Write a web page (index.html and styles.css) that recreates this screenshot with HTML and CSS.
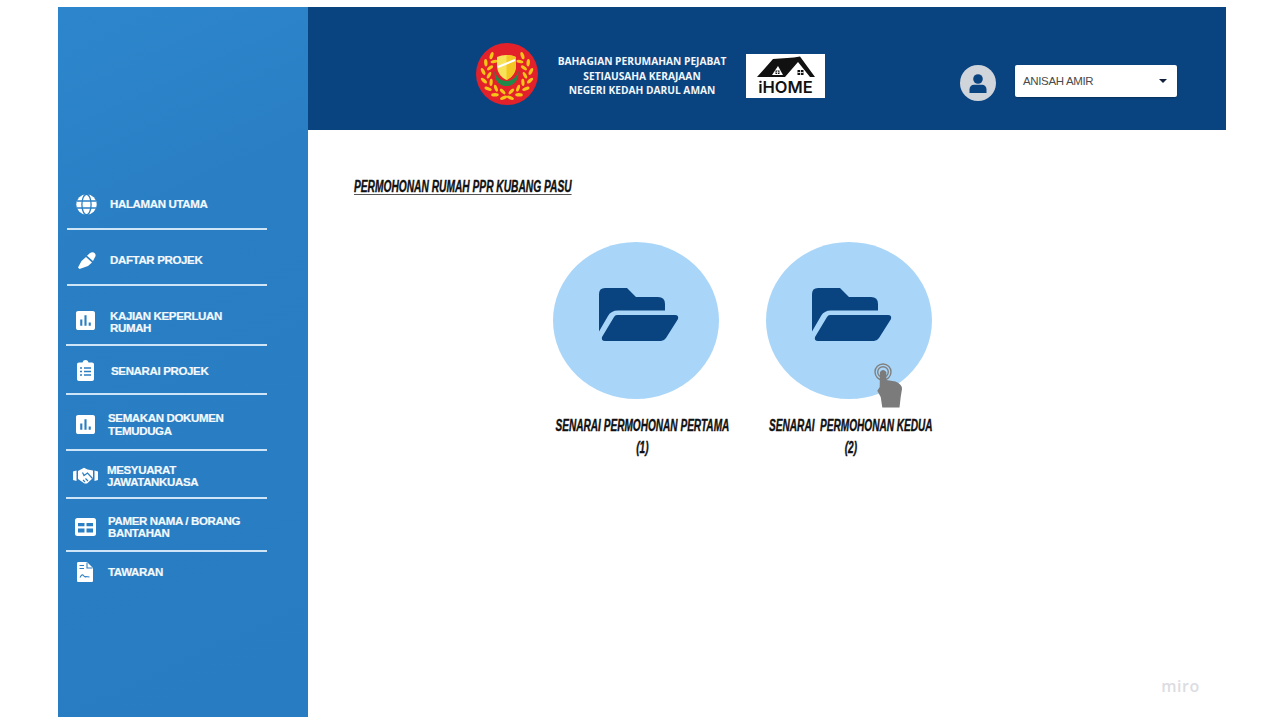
FILE: index.html
```html
<!DOCTYPE html>
<html lang="ms">
<head>
  <meta charset="UTF-8">
  <meta name="viewport" content="width=device-width, initial-scale=1">
  <title>iHOME - Permohonan Rumah PPR</title>
  <link rel="stylesheet" href="styles.css">
</head>
<body>
  <div class="app">
    <aside class="sidebar">
      <nav class="menu">
        <a class="menu-row">
          <span class="menu-icon"><svg width="21" height="21" viewBox="0 0 21 21"><circle cx="10.5" cy="10.5" r="10.2" fill="#fff"/><g fill="none" stroke="#2a7fc4" stroke-width="1.3"><ellipse cx="10.5" cy="10.5" rx="4.6" ry="10.2"/><path d="M0.8 7H20.2M0.8 14H20.2"/></g></svg></span>
          <span>HALAMAN UTAMA</span>
        </a>
        <a class="menu-row">
          <span class="menu-icon pen"><svg width="18" height="17" viewBox="0 0 18 17"><path fill="#fff" d="M1.500 17L0 15.500L3.500 9L8 5L14 10.500L10 14ZM9 3.800L12 1Q15 -.5 17 1.500Q18.500 3.500 16.500 6L15 9Z"/></svg></span>
          <span>DAFTAR PROJEK</span>
        </a>
        <a class="menu-row">
          <span class="menu-icon"><svg width="19" height="19" viewBox="3 3 18 18"><path fill="#fff" d="M19 3H5c-1.1 0-2 .9-2 2v14c0 1.1.9 2 2 2h14c1.1 0 2-.9 2-2V5c0-1.1-.9-2-2-2zM9 17H7v-6h2v6zm4 0h-2V7h2v10zm4 0h-2v-3h2v3z"/></svg></span>
          <span>KAJIAN KEPERLUAN<br>RUMAH</span>
        </a>
        <a class="menu-row">
          <span class="menu-icon"><svg width="17" height="21" viewBox="0 0 17 21"><path fill="#fff" d="M2 2.500H5.500C6 .8 7 0 8.500 0S11 .8 11.500 2.500H15c1.200 0 2 .8 2 2V19c0 1.200-.8 2-2 2H2c-1.200 0-2-.8-2-2V4.500c0-1.200.8-2 2-2z"/><path stroke="#2a7fc4" stroke-width="1.600" d="M3 8H5M7 8H14M3 11.500H5M7 11.500H14M3 15H5M7 15H14"/></svg></span>
          <span>SENARAI PROJEK</span>
        </a>
        <a class="menu-row">
          <span class="menu-icon"><svg width="19" height="19" viewBox="3 3 18 18"><path fill="#fff" d="M19 3H5c-1.1 0-2 .9-2 2v14c0 1.1.9 2 2 2h14c1.1 0 2-.9 2-2V5c0-1.1-.9-2-2-2zM9 17H7v-6h2v6zm4 0h-2V7h2v10zm4 0h-2v-3h2v3z"/></svg></span>
          <span>SEMAKAN DOKUMEN<br>TEMUDUGA</span>
        </a>
        <a class="menu-row">
          <span class="menu-icon"><svg width="25" height="17" viewBox="0 0 25 17"><path fill="#fff" d="M0 4.500L3.500 3.500V14L0 13ZM25 4.500L21.500 3.500V14L25 13ZM5 4L11 .8L14.500 2.500L20 3.500V11L14 16.500H11.500L5 12Z"/><path fill="none" stroke="#2a7fc4" stroke-width="1.200" d="M9.500 5.500L11 8.500L14.500 6L19.500 11.500M10 13L12 15M12.500 11.500L15 14"/></svg></span>
          <span>MESYUARAT<br>JAWATANKUASA</span>
        </a>
        <a class="menu-row">
          <span class="menu-icon"><svg width="21" height="18" viewBox="0 0 21 18"><rect width="21" height="18" rx="2.500" fill="#fff"/><path fill="#2a7fc4" d="M3 5H9.500V8.200H3ZM11.500 5H18V8.200H11.500ZM3 10.500H9.500V14.500H3ZM11.500 10.500H18V14.500H11.500Z"/></svg></span>
          <span>PAMER NAMA / BORANG<br>BANTAHAN</span>
        </a>
        <a class="menu-row">
          <span class="menu-icon"><svg width="16" height="20" viewBox="0 0 16 20"><path fill="#fff" d="M1.500 0H10L16 6V18.500C16 19.500 15.500 20 14.500 20H1.500C.5 20 0 19.500 0 18.500V1.500C0 .5.5 0 1.500 0Z"/><path fill="none" stroke="#2a7fc4" stroke-width="1.100" d="M2.500 3.500H7M2.500 6.500H7M3 15.500Q5 11.500 6.500 13.500T9 14.500L12.500 15M10 .5V6H15.500"/></svg></span>
          <span>TAWARAN</span>
        </a>
      </nav>
    </aside>

    <main class="content">
      <header class="topbar">
        <svg class="crest" width="62" height="62" viewBox="0 0 62 62">
          <defs>
            <ellipse id="leaf" cx="31" cy="55" rx="3.800" ry="1.700" fill="#f5c518" transform="rotate(-32 31 55)"/>
            <ellipse id="leaf-in" cx="31" cy="49" rx="3.600" ry="1.600" fill="#f5c518" transform="rotate(32 31 49)"/>
            <g id="wreath">
              <use href="#leaf" transform="rotate(8 31 31)"/>
              <use href="#leaf" transform="rotate(30 31 31)"/>
              <use href="#leaf" transform="rotate(52 31 31)"/>
              <use href="#leaf" transform="rotate(74 31 31)"/>
              <use href="#leaf" transform="rotate(96 31 31)"/>
              <use href="#leaf" transform="rotate(118 31 31)"/>
              <use href="#leaf" transform="rotate(140 31 31)"/>
              <use href="#leaf-in" transform="rotate(14 31 31)"/>
              <use href="#leaf-in" transform="rotate(38 31 31)"/>
              <use href="#leaf-in" transform="rotate(62 31 31)"/>
              <use href="#leaf-in" transform="rotate(86 31 31)"/>
              <use href="#leaf-in" transform="rotate(110 31 31)"/>
              <use href="#leaf-in" transform="rotate(134 31 31)"/>
            </g>
          </defs>
          <circle cx="31" cy="31" r="31" fill="#e3212b"/>
          <use href="#wreath"/>
          <use href="#wreath" transform="matrix(-1 0 0 1 62 0)"/>
          <path d="M18.500 28C18 38 24 43 30.500 43C37 43 43 38 42.500 28C41 34 36 38 30.500 38C25 38 20 34 18.500 28Z" fill="#1f8a4a"/>
          <path d="M21 14Q30 10 40 14V24Q39 33 30.500 37Q22 33 21 24Z" fill="#f7e35a"/>
          <path d="M30.500 12Q36 12 40 14V24Q39 33 30.500 37Z" fill="#f3c623"/>
          <path d="M22 24L39 17" stroke="#fff" stroke-width="2"/>
        </svg>
        <p class="dept-name">BAHAGIAN PERUMAHAN PEJABAT<br>SETIAUSAHA KERAJAAN<br>NEGERI KEDAH DARUL AMAN</p>
        <div class="ihome">
          <svg width="79" height="27" viewBox="0 0 79 27"><path fill="#111" d="M11 23L27 5L48 3.500L54 2.500L69 23H64L52 8L39 23Z"/><path fill="#fff" d="M32 12L37 21H26Z"/><path fill="#111" d="M29.500 16.500H33.500V20H29.500ZM51.500 16H57.500V21H51.500Z"/><path stroke="#fff" stroke-width=".8" d="M31.500 16.500V20M29.500 18.200H33.500M54.500 16V21M51.500 18.500H57.500"/></svg>
          <span>iHOME</span>
        </div>
        <div class="avatar">
          <svg width="18" height="19" viewBox="0 0 18 19"><circle cx="9" cy="5" r="4.800" fill="#0a4480"/><path fill="#0a4480" d="M.5 19V15.500C.5 12.500 2.500 10.800 5 10.800H13C15.500 10.800 17.500 12.500 17.500 15.500V19Z"/></svg>
        </div>
        <div class="user-select">
          <span>ANISAH AMIR</span>
          <i class="caret"></i>
        </div>
      </header>

      <section class="body">
        <h2 class="page-title">PERMOHONAN RUMAH PPR KUBANG PASU</h2>
        <div class="folders">
          <a class="folder-card">
            <div class="circle">
              <svg class="folder-icon" width="80" height="54" viewBox="0 0 80 54"><path fill="#0a4480" d="M0 6Q0 0 6 0H28L37 9H59Q66 9 66 16V22.500H19Q12 22.500 9 28L0 43.500ZM18 27H76Q80 27 79 31L67 50Q65 53 62 53H6Q2 53 3 49L15 29Q16 27 18 27Z"/></svg>
            </div>
            <p class="folder-label first">SENARAI PERMOHONAN PERTAMA<br>(1)</p>
          </a>
          <a class="folder-card">
            <div class="circle">
              <svg class="folder-icon" width="80" height="54" viewBox="0 0 80 54"><path fill="#0a4480" d="M0 6Q0 0 6 0H28L37 9H59Q66 9 66 16V22.500H19Q12 22.500 9 28L0 43.500ZM18 27H76Q80 27 79 31L67 50Q65 53 62 53H6Q2 53 3 49L15 29Q16 27 18 27Z"/></svg>
              <svg class="hand" width="30" height="46" viewBox="0 0 30 46"><g fill="none" stroke="#808080"><circle cx="9" cy="9" r="8" stroke-width="1.400"/><circle cx="9" cy="9" r="5.300" stroke-width="1.400"/></g><path fill="#7b7b7b" d="M6 9Q9 5 12.300 9V17L21.500 18.500Q28 21 28 26L26.700 34L25.500 44.500H8.300L6.700 34L3.300 27.700L5.700 24Z"/></svg>
            </div>
            <p class="folder-label second">SENARAI&nbsp; PERMOHONAN KEDUA<br>(2)</p>
          </a>
        </div>
      </section>

      <div class="watermark">miro</div>
    </main>
  </div>
</body>
</html>
```

FILE: styles.css
```css
* {
  box-sizing: border-box;
}
body {
  margin: 0;
  background-color: #fff;
  font-family: "Liberation Sans", Arial, sans-serif;
}
.app {
  display: flex;
  width: 1168px;
  height: 710px;
  margin: 7px 0 0 58px;
}

/* menu kiri */
.sidebar {
  width: 250px;
  background: linear-gradient(155deg, #2d86cc 0, #2a7fc4 30%, #287cc1 100%);
  padding: 167px 0 0 8px;
}
.menu {
  width: 201px;
}
.menu-row {
  display: flex;
  align-items: center;
  gap: 15px;
  padding-left: 9px;
  border-bottom: 2px solid #cde5f6;
  color: #f4f9fd;
  font-size: 11.500px;
  font-weight: bold;
  letter-spacing: -.35px;
  line-height: 12px;
  -webkit-text-stroke: .2px #f4f9fd;
}
.menu-icon {
  display: flex;
  flex: none;
  justify-content: center;
  width: 20px;
}
.menu-icon svg {
  flex: none;
}
.menu-icon.pen {
  margin-left: 1px;
  margin-right: -1px;
}
.menu-row:nth-child(1) { height: 56px; padding-top: 6px; margin-left: 1px; gap: 14px; }
.menu-row:nth-child(2) { height: 56px; padding-top: 6px; margin-left: 1px; gap: 14px; }
.menu-row:nth-child(3) { height: 60px; padding-top: 14px; }
.menu-row:nth-child(3) .menu-icon { margin-top: -4px; }
.menu-row:nth-child(4) { height: 49px; padding-top: 2px; gap: 16px; }
.menu-row:nth-child(5) { height: 56px; padding-top: 6px; gap: 13px; line-height: 13px; }
.menu-row:nth-child(5) .menu-icon { margin-top: -2px; }
.menu-row:nth-child(6) { height: 48px; padding-top: 3px; gap: 12px; }
.menu-row:nth-child(7) { height: 53px; padding-top: 4px; gap: 13px; }
.menu-row:nth-child(8) { height: 40px; gap: 13px; border-bottom: none; }

.content {
  position: relative;
  flex: 1;
}

/* bar atas */
.topbar {
  display: flex;
  align-items: flex-start;
  height: 123px;
  padding-left: 168px;
  background-color: #0a4480;
}
.crest {
  flex: none;
  margin-top: 36px;
}
.dept-name {
  width: 170px;
  margin: 47px 19px 0;
  color: #f2f6fb;
  font-family: "Open Sans", sans-serif;
  font-size: 10.200px;
  font-weight: 700;
  line-height: 14.500px;
  text-align: center;
  white-space: nowrap;
}
.ihome {
  width: 79px;
  height: 44px;
  margin-top: 47px;
  background-color: #fff;
  text-align: center;
}
.ihome svg {
  display: block;
}
.ihome span {
  display: block;
  margin-top: -2px;
  color: #111;
  font-family: "Inter", sans-serif;
  font-size: 16.500px;
  font-weight: 600;
  line-height: 17px;
}
.avatar {
  display: flex;
  align-items: center;
  justify-content: center;
  width: 36px;
  height: 36px;
  margin: 58px 19px 0 135px;
  border-radius: 50%;
  background-color: #d0d5dc;
}
.user-select {
  display: flex;
  align-items: center;
  justify-content: space-between;
  width: 162px;
  height: 32px;
  margin-top: 58px;
  padding: 0 10px 0 8px;
  border-radius: 2px;
  background-color: #fff;
  box-shadow: 0 1px 2px rgba(0, 0, 0, .3);
  color: #4a4a4a;
  font-size: 11.500px;
  letter-spacing: -.35px;
}
.caret {
  border-top: 4px solid #10203a;
  border-left: 4px solid transparent;
  border-right: 4px solid transparent;
}

/* isi */
.body {
  padding: 48px 0 0 46px;
}
.page-title {
  margin: 0;
  color: #111;
  font-size: 16px;
  font-style: italic;
  font-weight: bold;
  line-height: 18px;
  white-space: nowrap;
  text-decoration: underline;
  text-decoration-color: #555;
  text-underline-offset: 2px;
  transform: scaleX(.638);
  transform-origin: left center;
  -webkit-text-stroke: .4px #111;
}
.folders {
  display: flex;
  gap: 47px;
  margin: 46px 0 0 199px;
}
.folder-card {
  display: flex;
  flex-direction: column;
  align-items: center;
  width: 166px;
}
.circle {
  position: relative;
  display: flex;
  align-items: center;
  justify-content: center;
  width: 166px;
  height: 157px;
  border-radius: 50%;
  background-color: #a9d6f8;
}
.folder-icon {
  margin: 0 0 12px 6px;
}
.hand {
  position: absolute;
  left: 108px;
  top: 121px;
}
.folder-label {
  flex: none;
  margin: 16px 0 0;
  color: #111;
  font-size: 16px;
  font-style: italic;
  font-weight: bold;
  line-height: 22px;
  text-align: center;
  white-space: nowrap;
  transform: scaleX(.63);
  -webkit-text-stroke: .4px #111;
}
.folder-label.first {
  padding-left: 19px;
}
.folder-label.second {
  padding-left: 5px;
}
.watermark {
  position: absolute;
  right: 26px;
  bottom: 20px;
  color: #dcdce2;
  font-family: "Open Sans", sans-serif;
  font-size: 16px;
  font-weight: 600;
  letter-spacing: .6px;
}
```
